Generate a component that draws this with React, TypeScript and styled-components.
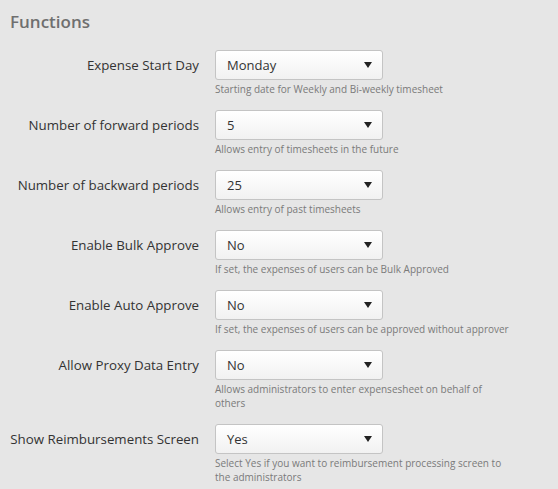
import React from 'react';
import styled, { createGlobalStyle } from 'styled-components';

const GlobalStyle = createGlobalStyle`
  html, body {
    margin: 0;
    padding: 0;
    background: #e6e6e6;
  }
  body {
    font-family: 'Open Sans', 'Noto Sans', 'Liberation Sans', sans-serif;
  }
`;

const Page = styled.div`
  padding: 10px 10px 8px;
  min-height: 489px;
  box-sizing: border-box;
  background: #e6e6e6;
`;

const Title = styled.h2`
  margin: 0 0 16px;
  font-size: 17px;
  line-height: 24px;
  font-weight: 600;
  color: #6f6f6f;
`;

const Form = styled.div`
  display: grid;
  grid-template-columns: 189px 1fr;
  column-gap: 16px;
`;

const Label = styled.label`
  height: 30px;
  display: flex;
  align-items: center;
  justify-content: flex-end;
  font-size: 13.3px;
  color: #333;
  white-space: nowrap;
`;

const Field = styled.div`
  margin-bottom: 14px;
`;

const Select = styled.div`
  width: 168px;
  height: 30px;
  box-sizing: border-box;
  display: flex;
  align-items: center;
  justify-content: space-between;
  padding: 0 10px 0 11px;
  border: 1px solid #c4c4c4;
  border-radius: 3px;
  background: linear-gradient(#ffffff, #f1f1f1);
  font-size: 13px;
  color: #333;
`;

const Arrow = styled.span`
  width: 0;
  height: 0;
  border-left: 4px solid transparent;
  border-right: 4px solid transparent;
  border-top: 6px solid #222;
`;

const Help = styled.div`
  margin-top: 2px;
  font-size: 10px;
  line-height: 14px;
  color: #7a7a7a;
  white-space: nowrap;
`;

const rows = [
  { label: 'Expense Start Day', value: 'Monday', help: ['Starting date for Weekly and Bi-weekly timesheet'] },
  { label: 'Number of forward periods', value: '5', help: ['Allows entry of timesheets in the future'] },
  { label: 'Number of backward periods', value: '25', help: ['Allows entry of past timesheets'] },
  { label: 'Enable Bulk Approve', value: 'No', help: ['If set, the expenses of users can be Bulk Approved'] },
  { label: 'Enable Auto Approve', value: 'No', help: ['If set, the expenses of users can be approved without approver'] },
  { label: 'Allow Proxy Data Entry', value: 'No', help: ['Allows administrators to enter expensesheet on behalf of', 'others'] },
  {
    label: 'Show Reimbursements Screen',
    value: 'Yes',
    help: ['Select Yes if you want to reimbursement processing screen to', 'the administrators'],
  },
];

export default function App() {
  return (
    <>
      <GlobalStyle />
      <Page>
        <Title>Functions</Title>
        <Form>
          {rows.map((r) => (
            <React.Fragment key={r.label}>
              <Label>{r.label}</Label>
              <Field>
                <Select>
                  <span>{r.value}</span>
                  <Arrow />
                </Select>
                <Help>
                  {r.help.map((line) => (
                    <div key={line}>{line}</div>
                  ))}
                </Help>
              </Field>
            </React.Fragment>
          ))}
        </Form>
      </Page>
    </>
  );
}
